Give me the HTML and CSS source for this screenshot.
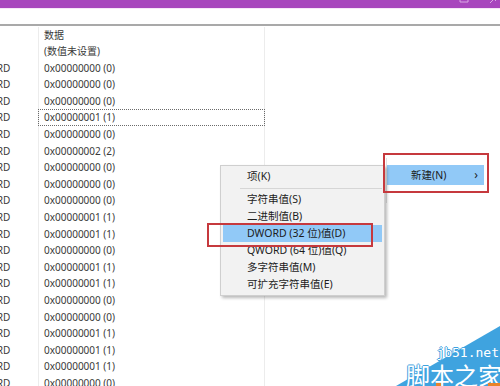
FILE: index.html
```html
<!DOCTYPE html>
<html lang="zh-CN">

<head>
    <meta charset="UTF-8">
    <meta name="viewport" content="width=device-width, initial-scale=1.0">
    <title>注册表编辑器</title>
    <link rel="stylesheet" href="styles.css">
</head>

<body>
    <div class="titlebar">
        <svg class="winbtns" width="50" height="8" viewBox="0 0 50 8">
            <path d="M10 0 v2 h8 v-2" fill="none" stroke="#d9a7e4" stroke-width="1" />
            <path d="M40 3 l3 -3 M46 0 l-1 1" fill="none" stroke="#d9a7e4" stroke-width="1" />
        </svg>
    </div>
    <div class="strip"></div>

    <div class="list">
        <div class="row"><span class="type">类型</span><span class="data">数据</span></div>
        <div class="row"><span class="type">REG_SZ</span><span class="data">(数值未设置)</span></div>
        <div class="row"><span class="type">REG_DWORD</span><span class="data">0x00000000 (0)</span></div>
        <div class="row"><span class="type">REG_DWORD</span><span class="data">0x00000000 (0)</span></div>
        <div class="row"><span class="type">REG_DWORD</span><span class="data">0x00000000 (0)</span></div>
        <div class="row focus"><span class="type">REG_DWORD</span><span class="data">0x00000001 (1)</span></div>
        <div class="row"><span class="type">REG_DWORD</span><span class="data">0x00000000 (0)</span></div>
        <div class="row"><span class="type">REG_DWORD</span><span class="data">0x00000002 (2)</span></div>
        <div class="row"><span class="type">REG_DWORD</span><span class="data">0x00000000 (0)</span></div>
        <div class="row"><span class="type">REG_DWORD</span><span class="data">0x00000000 (0)</span></div>
        <div class="row"><span class="type">REG_DWORD</span><span class="data">0x00000000 (0)</span></div>
        <div class="row"><span class="type">REG_DWORD</span><span class="data">0x00000001 (1)</span></div>
        <div class="row"><span class="type">REG_DWORD</span><span class="data">0x00000001 (1)</span></div>
        <div class="row"><span class="type">REG_DWORD</span><span class="data">0x00000000 (0)</span></div>
        <div class="row"><span class="type">REG_DWORD</span><span class="data">0x00000001 (1)</span></div>
        <div class="row"><span class="type">REG_DWORD</span><span class="data">0x00000001 (1)</span></div>
        <div class="row"><span class="type">REG_DWORD</span><span class="data">0x00000000 (0)</span></div>
        <div class="row"><span class="type">REG_DWORD</span><span class="data">0x00000000 (0)</span></div>
        <div class="row"><span class="type">REG_DWORD</span><span class="data">0x00000001 (1)</span></div>
        <div class="row"><span class="type">REG_DWORD</span><span class="data">0x00000001 (1)</span></div>
        <div class="row"><span class="type">REG_DWORD</span><span class="data">0x00000001 (1)</span></div>
        <div class="row"><span class="type">REG_DWORD</span><span class="data">0x00000000 (0)</span></div>
    </div>

    <!-- parent context menu, only the "new" item is visible -->
    <div class="parent-menu">
        <div class="menu-item active"><span>新建(N)</span><span class="arrow">›</span></div>
    </div>

    <!-- submenu -->
    <div class="menu">
        <div class="menu-item">项(K)</div>
        <div class="menu-sep"></div>
        <div class="menu-item">字符串值(S)</div>
        <div class="menu-item">二进制值(B)</div>
        <div class="menu-item active">DWORD (32 位)值(D)</div>
        <div class="menu-item">QWORD (64 位)值(Q)</div>
        <div class="menu-item">多字符串值(M)</div>
        <div class="menu-item">可扩充字符串值(E)</div>
    </div>

    <div class="redbox box-dword"></div>
    <div class="redbox box-new"></div>

    <div class="watermark">
        <div class="wm-url">jb51.net</div>
        <div class="wm-name">脚本之家</div>
        <span class="wm-dot dot1"></span>
        <span class="wm-dot dot2"></span>
    </div>
</body>

</html>
```

FILE: styles.css
```css
* {
    margin: 0;
    padding: 0;
    box-sizing: border-box;
}

body {
    width: 500px;
    height: 386px;
    overflow: hidden;
    position: relative;
    background: #fff;
    font-family: "Noto Sans", "Noto Sans CJK SC", sans-serif;
    font-size: 10.5px;
    color: #3a3a3a;
}

.titlebar {
    height: 8px;
    background: #a846bd;
    position: relative;
}

.winbtns {
    position: absolute;
    right: 0;
    top: 0;
}

.strip {
    height: 18px;
    background: #fff;
    border-top: 1px solid #f6e6f8;
    border-bottom: 2px solid #a9a9a9;
}

/* list is scrolled a little to the right, type column half hidden */
.list {
    margin-left: -51px;
    padding-top: 0.5px;
    font-size: 10px;
}

.row {
    display: grid;
    grid-template-columns: 89px 227px;
    height: 16.6px;
    line-height: 16.6px;
    white-space: nowrap;
}

.type {
    overflow: hidden;
}

.data {
    padding-left: 5px;
    border-left: 1px solid #ececec;
    border-right: 1px solid #ececec;
}

.focus .data {
    outline: 1px dotted #6a6a6a;
    outline-offset: -1px;
}

.menu {
    position: absolute;
    left: 220px;
    top: 165px;
    width: 165px;
    padding: 2px;
    background: #f2f2f2;
    border: 1px solid #cfcfcf;
    box-shadow: 2px 2px 3px rgba(0, 0, 0, 0.28);
    color: #1c1c1c;
}

.menu-item {
    height: 17px;
    line-height: 17px;
    padding-left: 24px;
    white-space: nowrap;
}

.menu-item.active {
    background: #91c9f7;
}

.menu-sep {
    height: 6px;
    margin-left: 17px;
    border-bottom: 1px solid #d6d6d6;
    transform: translateY(-2px);
}

.parent-menu {
    position: absolute;
    left: 386px;
    top: 158px;
    width: 100px;
    height: 45px;
    padding-top: 7px;
    border-left: 1px solid #e2e2e2;
    color: #1c1c1c;
}

.parent-menu .menu-item {
    display: flex;
    justify-content: space-between;
    width: 97px;
    height: 20px;
    line-height: 20px;
    padding-right: 6px;
}

.arrow {
    font-size: 12px;
}

.redbox {
    position: absolute;
    border: 2px solid #c6393d;
}

.box-dword {
    left: 207px;
    top: 223px;
    width: 166px;
    height: 24px;
}

.box-new {
    left: 383px;
    top: 153px;
    width: 106px;
    height: 40px;
}

.watermark {
    position: absolute;
    left: 396px;
    top: 326px;
    width: 104px;
    height: 60px;
    color: #fff;
    text-align: right;
    overflow: hidden;
}

.watermark:before {
    content: "";
    position: absolute;
    inset: 0;
    background: #3fa3df;
    clip-path: polygon(100% 0, 100% 100%, 0 100%);
}

.wm-url,
.wm-name {
    position: relative;
    text-shadow: 1px 0 0 #3fa3df, -1px 0 0 #3fa3df, 0 1px 0 #3fa3df, 0 -1px 0 #3fa3df;
}

.wm-url {
    font-family: "DejaVu Sans Mono", monospace;
    font-size: 13px;
    line-height: 13px;
    margin-top: 20px;
    padding-right: 1px;
}

.wm-name {
    font-family: "Noto Sans CJK SC", sans-serif;
    font-size: 24px;
    line-height: 24px;
    margin-top: 4px;
    margin-right: -2px;
    white-space: nowrap;
}

.wm-dot {
    position: absolute;
    bottom: 0;
    height: 3px;
    background: #e8832a;
}

.dot1 {
    left: 40px;
    width: 5px;
}

.dot2 {
    right: 0;
    width: 12px;
}
```
